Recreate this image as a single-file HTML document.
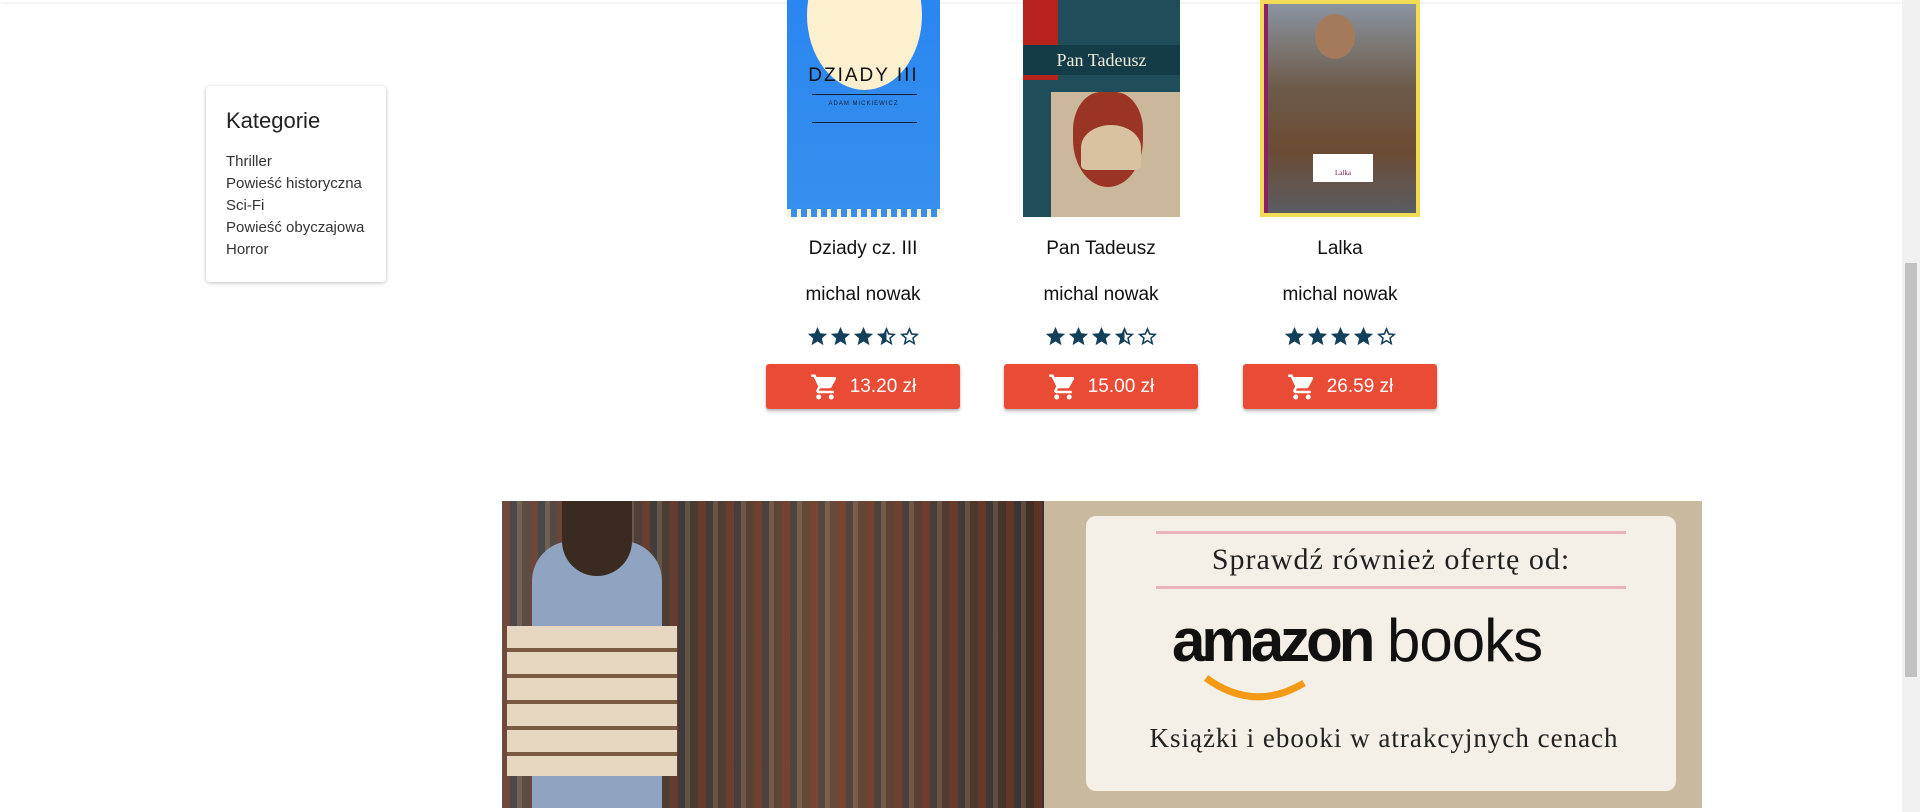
<!DOCTYPE html>
<html><head><meta charset="utf-8"><style>
*{margin:0;padding:0;box-sizing:border-box}
body{width:1920px;height:812px;overflow:hidden;background:#fff;font-family:"Liberation Sans",sans-serif;position:relative}
.topbar{position:absolute;left:0;top:0;width:1902px;height:2px;box-shadow:0 1px 3px rgba(0,0,0,.12)}
.card{position:absolute;left:206px;top:86px;width:180px;height:196px;background:#fff;border-radius:4px;box-shadow:0 1px 4px rgba(0,0,0,.25);padding:22px 0 0 20px;color:#222}
.card h3{font-weight:400;font-size:22px;margin-bottom:17px}
.card div{font-size:15px;line-height:22px;color:#333}
.cover{position:absolute;top:0;height:217px}
.t{position:absolute;width:200px;text-align:center;font-size:19px;color:#111}
.stars{position:absolute;width:200px;display:flex;justify-content:center;gap:0}
.btn{position:absolute;top:364px;width:194px;height:45px;background:#e94b35;border-radius:3px;box-shadow:0 2px 3px rgba(0,0,0,.3);color:#fff;font-size:19px;display:flex;align-items:center;justify-content:center;gap:10px}
.scroll{position:absolute;right:0;top:0;width:18px;height:812px;background:#f1f1f1}
.thumb{position:absolute;right:3px;top:263px;width:12px;height:414px;background:#c1c1c1}
</style></head><body>
<div class="topbar"></div>
<div class="card"><h3>Kategorie</h3><div>Thriller</div><div>Powieść historyczna</div><div>Sci-Fi</div><div>Powieść obyczajowa</div><div>Horror</div></div>

<div class="cover" style="left:787px;width:153px;background:linear-gradient(#2a86f0,#3790ee);overflow:hidden">
 <div style="position:absolute;left:20px;top:-60px;width:115px;height:150px;border-radius:50%;background:#fdf0cf"></div>
 <div style="position:absolute;left:0;top:65px;width:153px;text-align:center;font-size:19px;letter-spacing:2px;color:#111">DZIADY III</div>
 <div style="position:absolute;left:25px;top:94px;width:105px;border-top:1px solid #123;"></div>
 <div style="position:absolute;left:0;top:101px;width:153px;text-align:center;font-size:6px;letter-spacing:1px;color:#123">ADAM MICKIEWICZ</div>
 <div style="position:absolute;left:25px;top:122px;width:105px;border-top:1px solid #123;"></div>
 <div style="position:absolute;left:0;bottom:0;width:153px;height:8px;background:repeating-linear-gradient(90deg,#fdf0cf 0 4px,#3790ee 4px 10px)"></div>
</div>
<div class="cover" style="left:1023px;width:157px;background:#1f4e5a;overflow:hidden">
 <div style="position:absolute;left:0;top:0;width:35px;height:80px;background:#b8221d"></div>
 <div style="position:absolute;left:0;top:45px;width:157px;height:30px;background:#143c48;color:#f2ead8;font-family:'Liberation Serif',serif;font-size:18px;text-align:center;line-height:30px">Pan Tadeusz</div>
 <div style="position:absolute;left:28px;top:92px;width:129px;height:125px;background:#cbb89a"></div>
 <div style="position:absolute;left:50px;top:92px;width:70px;height:95px;border-radius:40% 40% 50% 50%;background:#9a3526"></div>
 <div style="position:absolute;left:58px;top:125px;width:60px;height:45px;border-radius:50% 50% 10% 10%;background:#d8c2a0"></div>
</div>
<div class="cover" style="left:1260px;width:160px;background:#f1dc55;padding:4px">
 <div style="width:100%;height:100%;background:linear-gradient(#8a94a0,#6d5b4a 40%,#6b4b33 70%,#5b5d63);border-left:4px solid #8a1f6a;position:relative">
  <div style="position:absolute;left:47px;top:10px;width:40px;height:45px;border-radius:50%;background:#a57a5a"></div>
  <div style="position:absolute;left:45px;top:150px;width:60px;height:28px;background:#fff;font-family:'Liberation Serif',serif;font-size:7px;color:#6a1a4a;text-align:center;padding-top:15px">Lalka</div>
 </div>
</div>

<div class="t" style="left:763px;top:238px">Dziady cz. III</div>
<div class="t" style="left:1001px;top:238px">Pan Tadeusz</div>
<div class="t" style="left:1240px;top:238px">Lalka</div>
<div class="t" style="left:763px;top:284px">michal nowak</div>
<div class="t" style="left:1001px;top:284px">michal nowak</div>
<div class="t" style="left:1240px;top:284px">michal nowak</div>

<svg width="0" height="0" style="position:absolute"><defs>
<symbol id="cart" viewBox="0 0 24 24"><path fill="#fff" d="M17 18a2 2 0 1 0 0 4 2 2 0 0 0 0-4M1 2v2h2l3.6 7.59-1.35 2.45C4.5 15.37 5.48 17 7 17h12v-2H7.42a.25.25 0 0 1-.25-.25l.03-.12.9-1.630h7.45c.75 0 1.41-.42 1.75-1.03l3.58-6.49A1 1 0 0 0 20 4H5.21l-.94-2M7 18a2 2 0 1 0 0 4 2 2 0 0 0 0-4z"/></symbol>
<symbol id="sf" viewBox="0 0 24 24"><path fill="#123f5a" d="M12 17.27L18.18 21l-1.64-7.03L22 9.24l-7.19-.61L12 2 9.19 8.63 2 9.24l5.46 4.73L5.82 21z"/></symbol>
<symbol id="sh" viewBox="0 0 24 24"><path fill="#123f5a" d="M22 9.24l-7.19-.62L12 2 9.19 8.63 2 9.24l5.46 4.73L5.82 21 12 17.27 18.18 21l-1.63-7.03L22 9.24zM12 15.4V6.1l1.71 4.04 4.38.38-3.32 2.88 1 4.28L12 15.4z"/></symbol>
<symbol id="se" viewBox="0 0 24 24"><path fill="#123f5a" d="M22 9.24l-7.19-.62L12 2 9.19 8.63 2 9.24l5.46 4.73L5.82 21 12 17.27 18.18 21l-1.63-7.03L22 9.24zM12 15.4l-3.76 2.27 1-4.28-3.32-2.88 4.38-.38L12 6.1l1.71 4.04 4.38.38-3.32 2.88 1 4.28L12 15.4z"/></symbol>
</defs></svg>
<div class="stars" style="left:763px;top:325px"><svg width="23" height="23"><use href="#sf"/></svg><svg width="23" height="23"><use href="#sf"/></svg><svg width="23" height="23"><use href="#sf"/></svg><svg width="23" height="23"><use href="#sh"/></svg><svg width="23" height="23"><use href="#se"/></svg></div>
<div class="stars" style="left:1001px;top:325px"><svg width="23" height="23"><use href="#sf"/></svg><svg width="23" height="23"><use href="#sf"/></svg><svg width="23" height="23"><use href="#sf"/></svg><svg width="23" height="23"><use href="#sh"/></svg><svg width="23" height="23"><use href="#se"/></svg></div>
<div class="stars" style="left:1240px;top:325px"><svg width="23" height="23"><use href="#sf"/></svg><svg width="23" height="23"><use href="#sf"/></svg><svg width="23" height="23"><use href="#sf"/></svg><svg width="23" height="23"><use href="#sf"/></svg><svg width="23" height="23"><use href="#se"/></svg></div>

<div class="btn" style="left:766px"><svg width="30" height="30"><use href="#cart"/></svg>13.20 zł</div>
<div class="btn" style="left:1004px"><svg width="30" height="30"><use href="#cart"/></svg>15.00 zł</div>
<div class="btn" style="left:1243px"><svg width="30" height="30"><use href="#cart"/></svg>26.59 zł</div>

<div style="position:absolute;left:502px;top:501px;width:542px;height:307px;background:linear-gradient(90deg,#5d5048 0,#4a3a30 35%,#6a4b3a 60%,#3f2e25 100%);overflow:hidden">
 <div style="position:absolute;left:0;top:0;width:542px;height:307px;background:repeating-linear-gradient(90deg,rgba(150,60,40,.35) 0 8px,rgba(40,60,80,.3) 8px 15px,rgba(200,180,150,.2) 15px 20px,transparent 20px 28px)"></div>
 <div style="position:absolute;left:30px;top:40px;width:130px;height:267px;background:#8ea4c0;border-radius:40px 40px 0 0"></div>
 <div style="position:absolute;left:60px;top:0;width:70px;height:75px;background:#3a2a20;border-radius:0 0 40px 40px"></div>
 <div style="position:absolute;left:5px;top:125px;width:170px;height:150px;background:repeating-linear-gradient(#e6d8c0 0 22px,#7a5a40 22px 26px)"></div>
</div>
<div style="position:absolute;left:1044px;top:501px;width:658px;height:307px;background:#c9b99e">
 <div style="position:absolute;left:42px;top:15px;width:590px;height:275px;background:#f4efe7;border-radius:10px"></div>
 <div style="position:absolute;left:112px;top:30px;width:470px;height:3px;background:#e9b5bb"></div>
 <div style="position:absolute;left:112px;top:85px;width:470px;height:3px;background:#e9b5bb"></div>
 <div style="position:absolute;left:112px;top:42px;width:470px;text-align:center;font-family:'Liberation Serif',serif;font-size:30px;color:#222;letter-spacing:1px">Sprawdź również ofertę od:</div>
 <div style="position:absolute;left:128px;top:110px;font-size:60px;color:#111;line-height:1"><b style="letter-spacing:-4px">amazon</b><span style="font-weight:400;letter-spacing:-1px"> books</span></div>
 <svg style="position:absolute;left:160px;top:172px" width="110" height="35"><path d="M2 5 Q50 40 100 10" stroke="#f59a17" stroke-width="7" fill="none"/></svg>
 <div style="position:absolute;left:60px;top:222px;width:560px;text-align:center;font-family:'Liberation Serif',serif;font-size:27px;color:#222;letter-spacing:1px">Książki i ebooki w atrakcyjnych cenach</div>
</div>

<div class="scroll"><div class="thumb"></div></div>
</body></html>
